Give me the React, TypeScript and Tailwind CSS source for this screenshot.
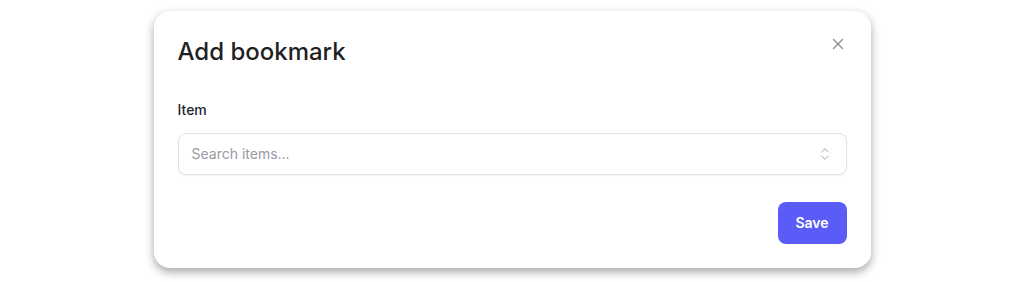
import { X, ChevronsUpDown } from 'lucide-react';

export default function App() {
  return (
    <div className="flex h-[282px] w-full items-start justify-center bg-white pt-[11px] font-['Inter',sans-serif]">
      <div className="w-[717px] rounded-2xl bg-white px-6 pt-6 pb-6 shadow-[0_4px_10px_rgba(0,0,0,0.35)]">
        <div className="flex items-start justify-between">
          <h2 className="mt-px text-2xl leading-8 font-medium text-[#1f1f24]">Add bookmark</h2>
          <button className="mt-0 text-[#8a8a93]">
            <X size={18} strokeWidth={1.75} />
          </button>
        </div>

        <label className="mt-[32px] mb-[13px] block text-sm leading-5 font-medium text-[#26262c]">Item</label>
        <div className="flex h-[42px] items-center justify-between rounded-lg border border-[#e2e2e6] px-[13px] shadow-[0_1px_2px_rgba(0,0,0,0.06)]">
          <span className="text-sm text-[#9a9aa3]">Search items...</span>
          <ChevronsUpDown size={16} strokeWidth={1.5} className="text-[#a3a3ad]" />
        </div>

        <div className="mt-[27px] flex justify-end">
          <button className="h-[42px] w-[69px] rounded-lg bg-[#5b5bf8] text-sm font-semibold text-white">Save</button>
        </div>
      </div>
    </div>
  );
}
